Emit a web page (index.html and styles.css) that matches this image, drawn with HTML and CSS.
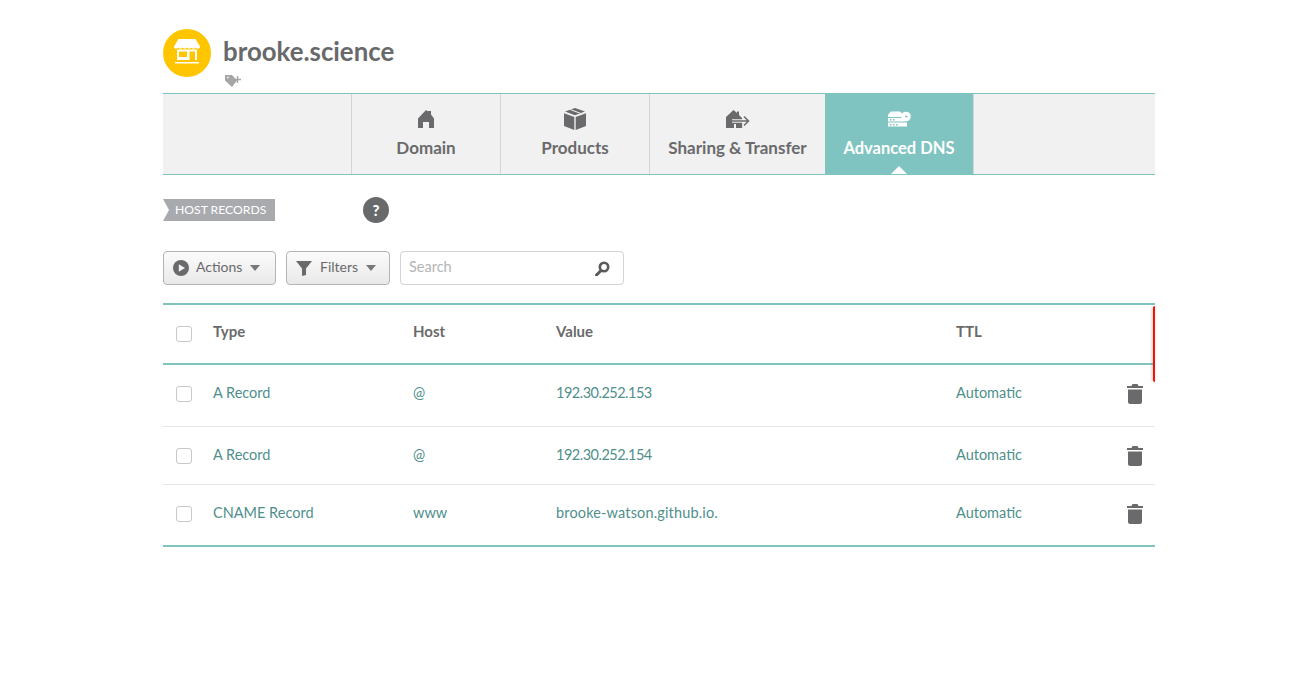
FILE: index.html
```html
<!DOCTYPE html>
<html lang="en">
<head>
<meta charset="UTF-8">
<title>brooke.science - Advanced DNS</title>
<link rel="stylesheet" href="styles.css">
</head>
<body>
  <div class="page">
    <div class="domain-head">
      <div class="logo">
        <svg width="26" height="25" viewBox="0 0 26 25" fill="#fff">
          <path d="M4.500 0h17L26 7.500c0 1.500-1 2.300-2.200 2.300-1 0-1.800-.5-2.200-1.200-.4.700-1.200 1.200-2.100 1.200s-1.700-.5-2.200-1.200c-.4.700-1.200 1.200-2.100 1.200s-1.600-.5-2.100-1.200c-.5.700-1.200 1.200-2.100 1.200S9 9.300 8.600 8.600c-.5.700-1.300 1.200-2.200 1.200s-1.700-.5-2.100-1.200c-.4.700-1.200 1.200-2.100 1.200C1 9.800 0 9 0 7.500z"/>
          <path fill-rule="evenodd" d="M3 10.500h20V21H3zM5 12.500v5.500h8v-5.500zM15.500 12.500V21h5.500v-8.500z"/>
          <path d="M1 23h24v1.500H1z"/>
        </svg>
      </div>
      <div class="domain-text">
        <h1>brooke.science</h1>
        <svg class="tag-icon" width="16" height="12" viewBox="0 0 16 12">
          <path fill="#a5a6a8" fill-rule="evenodd" d="M0 0h7l5 5.500L7 12 0 5.500zM2.200 1.700v1.500h1.500V1.700z"/>
          <path fill="#a5a6a8" d="M11.800 1h1.400v2.800H16v1.400h-2.800V8h-1.400V5.200H9.500V3.800h2.300z"/>
        </svg>
      </div>
    </div>

    <nav class="tabs">
      <div class="tab-spacer"></div>
      <a class="tab tab-domain">
        <svg width="18" height="18" viewBox="0 0 18 18" fill="#6a6a6c">
          <path d="M9 0l2 1.500V1h3v3.500l3 4V18h-5v-6H6v6H1V8.500z"/>
        </svg>
        <span>Domain</span>
      </a>
      <a class="tab tab-products">
        <svg width="22" height="22" viewBox="0 0 22 22" fill="#6a6a6c">
          <path d="M11 0l10 3.500L11 7.200 1 3.500z"/>
          <path d="M5.500 1.800l10 3.700 1.500-.6L7 1.300z" fill="#f1f1f1"/>
          <path d="M0 5.200l10.300 3.800V22L0 18z"/>
          <path d="M22 5.200L11.700 9v13L22 18z"/>
        </svg>
        <span>Products</span>
      </a>
      <a class="tab tab-sharing">
        <svg width="24" height="18" viewBox="0 0 24 18" fill="#6a6a6c">
          <path d="M7.500 0l3.500 3V1.500h2V5l3.500 3.500V18H10v-4H8v4H0V7z"/>
          <path d="M6 11h18M18 4.500v13h6v-13z" stroke="#f1f1f1" stroke-width="3.500" fill="#f1f1f1"/>
          <path d="M6 11h16M18 6.500l4.500 4.500-4.500 4.500" stroke="#6a6a6c" stroke-width="1.500" fill="none"/>
        </svg>
        <span>Sharing &amp; Transfer</span>
      </a>
      <a class="tab tab-active">
        <svg width="24" height="16" viewBox="0 0 24 16" fill="#fff">
          <path d="M4 .5h9l5 4.500V6H1V3.500z"/>
          <circle cx="19" cy="5.500" r="4.800"/>
          <path d="M1 7h14.500c.6.900 1.500 1.800 2.500 2.500V10.500H1zM1 11.500h19V15.500H1z"/>
          <path fill="#7fc4c1" d="M3 8h1.500v1.500H3zM6 8h1.500v1.500H6zM3 13h1.500v1.500H3zM6 13h1.500v1.500H6zM9 13h1.500v1.500H9zM18 4.800h2.500v1.400H18z"/>
        </svg>
        <span>Advanced DNS</span>
      </a>
    </nav>

    <div class="section-head">
      <div class="ribbon">HOST RECORDS</div>
      <div class="help">?</div>
    </div>

    <div class="toolbar">
      <button class="btn btn-actions">
        <svg width="16" height="16" viewBox="0 0 16 16">
          <circle cx="8" cy="8" r="8" fill="#6a6a6c"/>
          <path d="M5.800 4.200L12 8l-6.200 3.800z" fill="#f1f1f1"/>
        </svg>
        <span>Actions</span>
        <i class="caret"></i>
      </button>
      <button class="btn btn-filters">
        <svg width="16" height="16" viewBox="0 0 16 16" fill="#6a6a6c">
          <path d="M0 1h16L10 8.500V15l-4 1V8.500z"/>
        </svg>
        <span>Filters</span>
        <i class="caret"></i>
      </button>
      <div class="search">
        <span>Search</span>
        <svg width="15" height="15" viewBox="0 0 15 15">
          <circle cx="9" cy="6" r="4.200" fill="none" stroke="#5a5a5c" stroke-width="2.600"/>
          <path d="M6 9.500L1.500 14" stroke="#5a5a5c" stroke-width="3" stroke-linecap="round"/>
        </svg>
      </div>
    </div>

    <div class="records">
      <div class="notice-edge"></div>
      <div class="row row-head">
        <div class="check"></div>
        <div class="cell">Type</div>
        <div class="cell">Host</div>
        <div class="cell">Value</div>
        <div class="cell">TTL</div>
      </div>
      <div class="row row-1">
        <div class="check"></div>
        <div class="cell">A Record</div>
        <div class="cell">@</div>
        <div class="cell ip">192.30.252.153</div>
        <div class="cell">Automatic</div>
        <svg class="trash" width="16" height="20" viewBox="0 0 16 20" fill="#6a6a6c">
          <path d="M5.500 0h5l1 2H16v2H0V2h4.500zM1 5.500h14V18a2 2 0 0 1-2 2H3a2 2 0 0 1-2-2z"/>
        </svg>
      </div>
      <div class="row row-2">
        <div class="check"></div>
        <div class="cell">A Record</div>
        <div class="cell">@</div>
        <div class="cell ip">192.30.252.154</div>
        <div class="cell">Automatic</div>
        <svg class="trash" width="16" height="20" viewBox="0 0 16 20" fill="#6a6a6c">
          <path d="M5.500 0h5l1 2H16v2H0V2h4.500zM1 5.500h14V18a2 2 0 0 1-2 2H3a2 2 0 0 1-2-2z"/>
        </svg>
      </div>
      <div class="row row-3">
        <div class="check"></div>
        <div class="cell">CNAME Record</div>
        <div class="cell">www</div>
        <div class="cell host">brooke-watson.github.io.</div>
        <div class="cell">Automatic</div>
        <svg class="trash" width="16" height="20" viewBox="0 0 16 20" fill="#6a6a6c">
          <path d="M5.500 0h5l1 2H16v2H0V2h4.500zM1 5.500h14V18a2 2 0 0 1-2 2H3a2 2 0 0 1-2-2z"/>
        </svg>
      </div>
    </div>
  </div>
</body>
</html>
```

FILE: styles.css
```css
body {
  margin: 0;
  background: #fff;
  color: #6a6a6c;
  font-family: Lato, "Open Sans", sans-serif;
}
.page {
  width: 992px;
  margin-left: 163px;
  padding-top: 29px;
}

/* Domain header */
.domain-head {
  display: flex;
  height: 64px;
}
.logo {
  box-sizing: border-box;
  width: 48px;
  height: 48px;
  padding-bottom: 3px;
  border-radius: 50%;
  background: #ffc600;
  display: flex;
  align-items: center;
  justify-content: center;
}
.domain-text {
  margin-left: 12px;
}
h1 {
  margin: 7px 0 0;
  font-size: 25.800px;
  line-height: 30px;
  font-weight: 700;
  color: #68696b;
}
.tag-icon {
  display: block;
  margin: 9px 0 0 2px;
}

/* Tabs */
.tabs {
  display: flex;
  height: 80px;
  background: #f1f1f1;
  border-top: 1px solid #7fc4c1;
  border-bottom: 1px solid #7fc4c1;
}
.tab-spacer {
  width: 188px;
}
.tab {
  display: flex;
  flex-direction: column;
  align-items: center;
  box-sizing: border-box;
  border-left: 1px solid #d4d4d4;
  font-size: 17px;
  font-weight: 700;
  position: relative;
}
.tab svg {
  height: 22px;
  margin-top: 14px;
}
.tab span {
  margin-top: 7px;
  line-height: 22px;
}
.tab-domain,
.tab-products {
  width: 149px;
}
.tab-sharing {
  width: 176px;
}
.tab-active {
  width: 149px;
  background: #7fc4c1;
  color: #fff;
  font-size: 16.500px;
  border-right: 1px solid #d4d4d4;
  border-left: 0;
}
.tab-active::after {
  content: "";
  position: absolute;
  bottom: 0;
  left: 66px;
  border: 8px solid transparent;
  border-top: 0;
  border-bottom-color: #fff;
}

/* Host records heading */
.section-head {
  display: flex;
  align-items: center;
  height: 28px;
  margin-top: 21px;
}
.ribbon {
  box-sizing: border-box;
  width: 112px;
  height: 22px;
  padding-left: 12px;
  background: #a9aaad;
  color: #fff;
  font-size: 12.200px;
  line-height: 22px;
  clip-path: polygon(0 0, 100% 0, 100% 100%, 0 100%, 6px 50%);
}
.help {
  width: 26px;
  height: 26px;
  margin-left: 88px;
  border-radius: 50%;
  background: #68696b;
  color: #fff;
  font-size: 15px;
  font-weight: 900;
  line-height: 26px;
  text-align: center;
}

/* Toolbar */
.toolbar {
  display: flex;
  gap: 10px;
  height: 34px;
  margin-top: 27px;
}
.btn {
  display: flex;
  align-items: center;
  box-sizing: border-box;
  height: 34px;
  padding: 0 0 0 9px;
  border: 1px solid #b4b4b4;
  border-radius: 4px;
  background: linear-gradient(#fbfbfb, #e9e9e9);
  color: #6a6a6c;
  font-family: inherit;
  font-size: 14px;
}
.btn span {
  margin-left: 7px;
  padding-bottom: 3px;
}
.btn-filters span {
  margin-left: 8px;
}
.btn-actions {
  width: 113px;
}
.btn-filters {
  width: 104px;
}
.caret {
  margin-left: 8px;
  border: 5.500px solid transparent;
  border-bottom: 0;
  border-top: 6px solid #77787a;
}
.search {
  display: flex;
  align-items: center;
  justify-content: space-between;
  box-sizing: border-box;
  width: 224px;
  padding: 0 13px 0 8px;
  border: 1px solid #d4d4d4;
  border-radius: 4px;
  color: #b4b4b4;
  font-size: 14.500px;
}
.search span {
  padding-bottom: 3px;
}

/* Records table */
.records {
  position: relative;
  margin-top: 18px;
  border-top: 2px solid #7fc4c1;
}
.notice-edge {
  position: absolute;
  top: 1px;
  right: 0;
  width: 2.500px;
  height: 76px;
  border-radius: 3px 0 0 3px;
  background: #f80f00;
  box-shadow: -1px 0 3px rgba(0, 0, 0, .25);
}
.row {
  display: grid;
  grid-template-columns: 50px 200px 143px 400px 171px 16px;
  align-items: center;
  box-sizing: border-box;
  font-size: 14.500px;
  color: #4f8f8c;
}
.cell {
  padding-bottom: 3px;
}
.ip {
  letter-spacing: -.5px;
}
.host {
  letter-spacing: .15px;
}
.check {
  box-sizing: border-box;
  width: 16px;
  height: 16px;
  margin-left: 13px;
  border: 1px solid #c8c8c8;
  border-radius: 3px;
  background: #fff;
}
.row-head {
  height: 60px;
  border-bottom: 2px solid #7fc4c1;
  color: #6a6a6c;
  font-size: 15px;
  font-weight: 700;
}
.row-head .cell {
  padding-bottom: 6px;
}
.row-1 {
  height: 62px;
  padding-bottom: 4px;
  border-bottom: 1px solid #e6e6e6;
}
.row-2 {
  height: 58px;
  border-bottom: 1px solid #e6e6e6;
}
.row-3 {
  height: 62px;
  padding-bottom: 3px;
  border-bottom: 2px solid #7fc4c1;
}
```
